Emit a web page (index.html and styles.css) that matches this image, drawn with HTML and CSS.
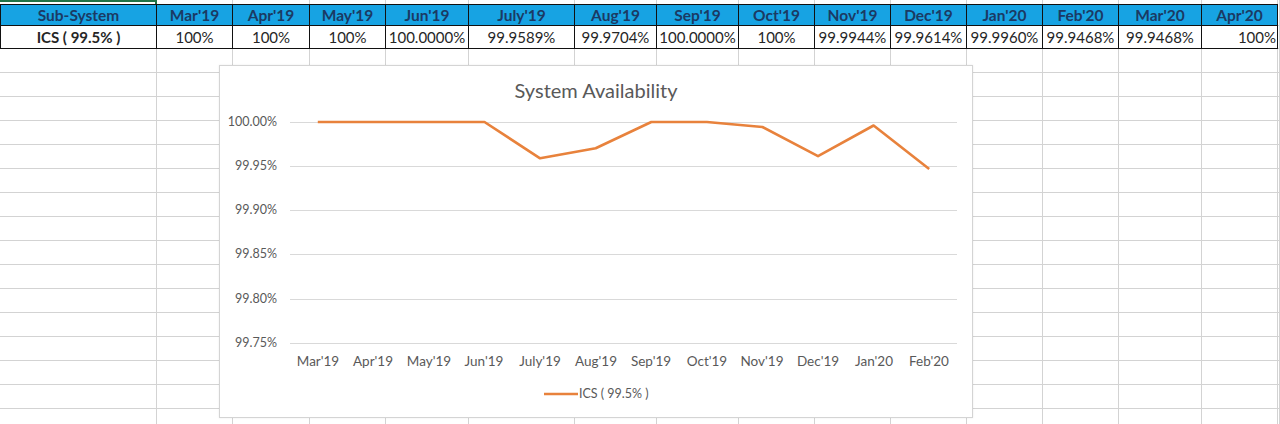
FILE: index.html
```html
<!DOCTYPE html>
<html>
<head>
<meta charset="utf-8">
<link rel="stylesheet" href="styles.css">
</head>
<body>
<div class="sheet">
  <div class="row top">
    <div class="c sel"></div><div class="c"></div><div class="c"></div><div class="c"></div><div class="c"></div><div class="c"></div><div class="c"></div><div class="c"></div><div class="c"></div><div class="c"></div><div class="c"></div><div class="c"></div><div class="c"></div><div class="c"></div><div class="c"></div><div class="c"></div>
  </div>
  <div class="row hdr">
    <div class="c first">Sub-System</div><div class="c">Mar'19</div><div class="c">Apr'19</div><div class="c">May'19</div><div class="c">Jun'19</div><div class="c">July'19</div><div class="c">Aug'19</div><div class="c">Sep'19</div><div class="c">Oct'19</div><div class="c">Nov'19</div><div class="c">Dec'19</div><div class="c">Jan'20</div><div class="c">Feb'20</div><div class="c">Mar'20</div><div class="c">Apr'20</div><div class="c blank"></div>
  </div>
  <div class="row data">
    <div class="c first name">ICS ( 99.5% )</div><div class="c">100%</div><div class="c">100%</div><div class="c">100%</div><div class="c">100.0000%</div><div class="c">99.9589%</div><div class="c">99.9704%</div><div class="c">100.0000%</div><div class="c">100%</div><div class="c">99.9944%</div><div class="c">99.9614%</div><div class="c">99.9960%</div><div class="c">99.9468%</div><div class="c">99.9468%</div><div class="c right">100%</div><div class="c blank"></div>
  </div>
  <div class="row e"><div class="c"></div><div class="c"></div><div class="c"></div><div class="c"></div><div class="c"></div><div class="c"></div><div class="c"></div><div class="c"></div><div class="c"></div><div class="c"></div><div class="c"></div><div class="c"></div><div class="c"></div><div class="c"></div><div class="c"></div><div class="c"></div></div>
  <div class="row e"><div class="c"></div><div class="c"></div><div class="c"></div><div class="c"></div><div class="c"></div><div class="c"></div><div class="c"></div><div class="c"></div><div class="c"></div><div class="c"></div><div class="c"></div><div class="c"></div><div class="c"></div><div class="c"></div><div class="c"></div><div class="c"></div></div>
  <div class="row e"><div class="c"></div><div class="c"></div><div class="c"></div><div class="c"></div><div class="c"></div><div class="c"></div><div class="c"></div><div class="c"></div><div class="c"></div><div class="c"></div><div class="c"></div><div class="c"></div><div class="c"></div><div class="c"></div><div class="c"></div><div class="c"></div></div>
  <div class="row e"><div class="c"></div><div class="c"></div><div class="c"></div><div class="c"></div><div class="c"></div><div class="c"></div><div class="c"></div><div class="c"></div><div class="c"></div><div class="c"></div><div class="c"></div><div class="c"></div><div class="c"></div><div class="c"></div><div class="c"></div><div class="c"></div></div>
  <div class="row e"><div class="c"></div><div class="c"></div><div class="c"></div><div class="c"></div><div class="c"></div><div class="c"></div><div class="c"></div><div class="c"></div><div class="c"></div><div class="c"></div><div class="c"></div><div class="c"></div><div class="c"></div><div class="c"></div><div class="c"></div><div class="c"></div></div>
  <div class="row e"><div class="c"></div><div class="c"></div><div class="c"></div><div class="c"></div><div class="c"></div><div class="c"></div><div class="c"></div><div class="c"></div><div class="c"></div><div class="c"></div><div class="c"></div><div class="c"></div><div class="c"></div><div class="c"></div><div class="c"></div><div class="c"></div></div>
  <div class="row e"><div class="c"></div><div class="c"></div><div class="c"></div><div class="c"></div><div class="c"></div><div class="c"></div><div class="c"></div><div class="c"></div><div class="c"></div><div class="c"></div><div class="c"></div><div class="c"></div><div class="c"></div><div class="c"></div><div class="c"></div><div class="c"></div></div>
  <div class="row e"><div class="c"></div><div class="c"></div><div class="c"></div><div class="c"></div><div class="c"></div><div class="c"></div><div class="c"></div><div class="c"></div><div class="c"></div><div class="c"></div><div class="c"></div><div class="c"></div><div class="c"></div><div class="c"></div><div class="c"></div><div class="c"></div></div>
  <div class="row e"><div class="c"></div><div class="c"></div><div class="c"></div><div class="c"></div><div class="c"></div><div class="c"></div><div class="c"></div><div class="c"></div><div class="c"></div><div class="c"></div><div class="c"></div><div class="c"></div><div class="c"></div><div class="c"></div><div class="c"></div><div class="c"></div></div>
  <div class="row e"><div class="c"></div><div class="c"></div><div class="c"></div><div class="c"></div><div class="c"></div><div class="c"></div><div class="c"></div><div class="c"></div><div class="c"></div><div class="c"></div><div class="c"></div><div class="c"></div><div class="c"></div><div class="c"></div><div class="c"></div><div class="c"></div></div>
  <div class="row e"><div class="c"></div><div class="c"></div><div class="c"></div><div class="c"></div><div class="c"></div><div class="c"></div><div class="c"></div><div class="c"></div><div class="c"></div><div class="c"></div><div class="c"></div><div class="c"></div><div class="c"></div><div class="c"></div><div class="c"></div><div class="c"></div></div>
  <div class="row e"><div class="c"></div><div class="c"></div><div class="c"></div><div class="c"></div><div class="c"></div><div class="c"></div><div class="c"></div><div class="c"></div><div class="c"></div><div class="c"></div><div class="c"></div><div class="c"></div><div class="c"></div><div class="c"></div><div class="c"></div><div class="c"></div></div>
  <div class="row e"><div class="c"></div><div class="c"></div><div class="c"></div><div class="c"></div><div class="c"></div><div class="c"></div><div class="c"></div><div class="c"></div><div class="c"></div><div class="c"></div><div class="c"></div><div class="c"></div><div class="c"></div><div class="c"></div><div class="c"></div><div class="c"></div></div>
  <div class="row e"><div class="c"></div><div class="c"></div><div class="c"></div><div class="c"></div><div class="c"></div><div class="c"></div><div class="c"></div><div class="c"></div><div class="c"></div><div class="c"></div><div class="c"></div><div class="c"></div><div class="c"></div><div class="c"></div><div class="c"></div><div class="c"></div></div>
  <div class="row e"><div class="c"></div><div class="c"></div><div class="c"></div><div class="c"></div><div class="c"></div><div class="c"></div><div class="c"></div><div class="c"></div><div class="c"></div><div class="c"></div><div class="c"></div><div class="c"></div><div class="c"></div><div class="c"></div><div class="c"></div><div class="c"></div></div>
  <div class="row e"><div class="c"></div><div class="c"></div><div class="c"></div><div class="c"></div><div class="c"></div><div class="c"></div><div class="c"></div><div class="c"></div><div class="c"></div><div class="c"></div><div class="c"></div><div class="c"></div><div class="c"></div><div class="c"></div><div class="c"></div><div class="c"></div></div>

  <div class="chart">
    <svg class="plot" width="754" height="353" viewBox="0 0 754 353">
      <text class="title" x="377" y="33" text-anchor="middle">System Availability</text>
      <g class="grid">
        <line x1="71" y1="57.5" x2="738" y2="57.5"/>
        <line x1="71" y1="101.5" x2="738" y2="101.5"/>
        <line x1="71" y1="145.5" x2="738" y2="145.5"/>
        <line x1="71" y1="189.5" x2="738" y2="189.5"/>
        <line x1="71" y1="234.5" x2="738" y2="234.5"/>
        <line x1="71" y1="278.5" x2="738" y2="278.5"/>
      </g>
      <g class="ylab" text-anchor="end">
        <text x="58" y="61">100.00%</text>
        <text x="58" y="105">99.95%</text>
        <text x="58" y="149">99.90%</text>
        <text x="58" y="193">99.85%</text>
        <text x="58" y="238">99.80%</text>
        <text x="58" y="282">99.75%</text>
      </g>
      <g class="xlab" text-anchor="middle">
        <text x="99" y="301">Mar'19</text>
        <text x="154" y="301">Apr'19</text>
        <text x="210" y="301">May'19</text>
        <text x="265" y="301">Jun'19</text>
        <text x="321" y="301">July'19</text>
        <text x="377" y="301">Aug'19</text>
        <text x="432" y="301">Sep'19</text>
        <text x="488" y="301">Oct'19</text>
        <text x="543" y="301">Nov'19</text>
        <text x="599" y="301">Dec'19</text>
        <text x="655" y="301">Jan'20</text>
        <text x="710" y="301">Feb'20</text>
      </g>
      <polyline class="series" points="98.8,57 154.4,57 210,57 265.5,57 321.1,93.3 376.7,83.2 432.3,57 487.9,57 543.4,62 599,91.1 654.6,60.5 710.2,104"/>
      <line class="series" x1="325" y1="329" x2="359" y2="329"/>
      <text class="legend" x="360" y="333">ICS ( 99.5% )</text>
    </svg>
  </div>
</div>
</body>
</html>
```

FILE: styles.css
```css
html, body {
  margin: 0;
  padding: 0;
  background: #ffffff;
}
body {
  font-family: Lato, "Open Sans", sans-serif;
  width: 1280px;
  height: 424px;
  overflow: hidden;
}
.sheet {
  position: relative;
  width: 1280px;
}
.row {
  display: grid;
  grid-template-columns: 157px 76px 77px 76px 83px 106px 82px 82px 76px 76px 76px 76px 76px 83px 76px 1fr;
}
.c {
  box-sizing: border-box;
  border-right: 1px solid #d3d3d3;
  border-bottom: 1px solid #d3d3d3;
  white-space: nowrap;
  overflow: hidden;
}
.top {
  height: 4px;
}
.top .c {
  border-bottom: none;
}
.top .sel {
  border-top: 2px solid #217346;
  border-right: 2px solid #217346;
}
.hdr {
  height: 22px;
}
.hdr .c {
  background: #17a3e3;
  border-top: 1px solid #111;
  border-bottom: 1px solid #111;
  border-right: 1px solid #111;
  color: #1b3a63;
  font-weight: 700;
  font-size: 15.5px;
  line-height: 20px;
  text-align: center;
}
.hdr .c.blank, .data .c.blank {
  background: #fff;
  border-top: none;
  border-right: 1px solid #d3d3d3;
  border-bottom: 1px solid #d3d3d3;
}
.c.first {
  border-left: 1px solid #111;
}
.data {
  height: 23px;
}
.data .c {
  border-bottom: 1px solid #111;
  border-right: 1px solid #111;
  color: #262626;
  font-size: 15px;
  line-height: 22px;
  text-align: center;
}
.data .name {
  font-weight: 700;
}
.data .right {
  text-align: right;
  padding-right: 1px;
}
.e {
  height: 24px;
}
.chart {
  position: absolute;
  left: 219px;
  top: 65px;
  width: 754px;
  height: 353px;
  box-sizing: border-box;
  background: #ffffff;
  border: 1px solid #d4d4d4;
  box-shadow: 0 0 2px rgba(0,0,0,0.08);
}
.plot {
  display: block;
  position: absolute;
  left: -1px;
  top: -1px;
}
.title {
  font-family: Lato, "Open Sans", sans-serif;
  font-size: 20px;
  fill: #595959;
}
.grid line {
  stroke: #d9d9d9;
  stroke-width: 1;
}
.ylab text, .legend {
  font-family: Lato, "Open Sans", sans-serif;
  font-size: 12.5px;
  fill: #595959;
}
.xlab text {
  font-family: Lato, "Open Sans", sans-serif;
  font-size: 13.5px;
  fill: #595959;
}
.series {
  fill: none;
  stroke: #e8823c;
  stroke-width: 2.6;
  stroke-linejoin: round;
}
```
